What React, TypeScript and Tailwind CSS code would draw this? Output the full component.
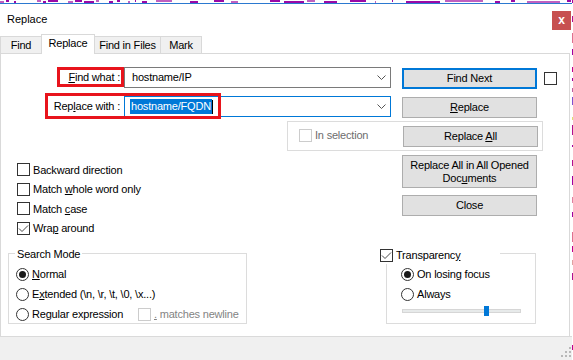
import React from "react";

function CheckBox({ checked, disabled }: { checked?: boolean; disabled?: boolean }) {
  return (
    <span
      className={`w-[13px] h-[13px] border ${disabled ? "border-[#cccccc]" : "border-[#333333]"} bg-white flex items-center justify-center shrink-0`}
    >
      {checked && (
        <svg width="11" height="11" viewBox="0 0 11 11">
          <path d="M1 5.5 L4 8.5 L10 2.5" fill="none" stroke="#4a4a4a" strokeWidth="1" />
        </svg>
      )}
    </span>
  );
}

function Radio({ selected }: { selected?: boolean }) {
  return (
    <span className="w-[13px] h-[13px] rounded-full border border-[#333333] bg-white flex items-center justify-center shrink-0">
      {selected && <span className="w-[7px] h-[7px] rounded-full bg-[#1a1a1a]" />}
    </span>
  );
}

function Btn({ children, focused, className = "" }: { children: React.ReactNode; focused?: boolean; className?: string }) {
  return (
    <div
      className={`w-[135px] bg-[#e1e1e1] ${focused ? "border-2 border-[#0078d7]" : "border border-[#adadad]"} flex items-center justify-center text-center leading-[13px] shrink-0 ${className}`}
    >
      {children}
    </div>
  );
}

function Chevron() {
  return (
    <svg width="9" height="5" viewBox="0 0 9 5" className="shrink-0">
      <path d="M0.5 0.5 L4.5 4.5 L8.5 0.5" fill="none" stroke="#555" strokeWidth="1" />
    </svg>
  );
}

const topBits: [number, number][] = [
  [0, 4], [6, 3], [14, 2], [37, 4], [43, 3], [48, 10], [68, 5], [75, 7], [84, 10], [96, 3], [109, 4], [117, 3], [128, 2], [135, 1], [142, 5], [156, 16], [190, 8], [214, 10], [231, 7], [270, 10], [284, 20], [307, 8], [324, 13], [350, 16], [375, 1], [392, 1], [406, 34], [445, 38], [495, 5], [511, 4], [527, 33], [567, 4],
];

const sideBits: [number, number, string][] = [
  [0, 3, "#a000a0"], [16, 6, "#b01090"], [33, 10, "#e07090"], [49, 6, "#a000a0"], [67, 5, "#c00090"], [78, 3, "#a000a0"], [88, 4, "#c060a0"], [97, 8, "#8050d0"], [117, 3, "#e0e070"], [125, 10, "#b01090"], [145, 2, "#a000a0"], [160, 6, "#b01090"], [176, 9, "#a000a0"], [197, 6, "#e080a0"], [212, 5, "#a000a0"], [232, 10, "#e07090"], [246, 6, "#c00090"], [260, 5, "#e0a0a0"], [273, 7, "#b01090"], [345, 5, "#c00090"],
];

export default function App() {
  return (
    <div className="w-[573px] h-[360px] overflow-hidden bg-white flex font-['Liberation_Sans',Arial,sans-serif] text-[11px] tracking-[-0.2px] text-black">
      <div className="w-[572px] h-[360px] flex flex-col">
        {/* background artifacts + accent line */}
        <svg width="572" height="3" className="block shrink-0">
          {topBits.map(([x, w], i) => (
            <rect key={i} x={x} y={i % 2 ? 0 : 1} width={w} height={2} fill={i % 3 ? "#9a0aa6" : "#c060c0"} />
          ))}
        </svg>
        <div className="h-px bg-[#2b79d0] shrink-0" />

        {/* title bar */}
        <div className="h-[30px] flex items-start shrink-0">
          <div className="pl-[7px] h-[30px] flex items-center text-[11px] tracking-normal">Replace</div>
          <div className="ml-auto mt-[7px] mr-px w-[19px] h-[19px] bg-[#c75050] text-white font-bold flex items-center justify-center text-[12px] leading-none pb-[2px]">
            x
          </div>
        </div>

        {/* tabs */}
        <div className="h-[19px] flex items-end shrink-0 relative z-10">
          <div className="w-[42px] h-[17px] bg-[#f0f0f0] border border-b-0 border-[#d9d9d9] flex items-center justify-center">Find</div>
          <div className="-ml-px w-[54px] h-[20px] -mb-px bg-white border border-b-0 border-[#d9d9d9] flex items-center justify-center pb-[3px]">Replace</div>
          <div className="-ml-px w-[67px] h-[17px] bg-[#f0f0f0] border border-b-0 border-[#d9d9d9] flex items-center justify-center">Find in Files</div>
          <div className="-ml-px w-[42px] h-[17px] bg-[#f0f0f0] border border-b-0 border-[#d9d9d9] flex items-center justify-center">Mark</div>
        </div>

        {/* panel */}
        <div className="w-[570px] h-[283px] border border-b-0 border-[#d9d9d9] flex flex-col shrink-0">
          {/* row 1 */}
          <div className="mt-[13px] h-[22px] flex items-start">
            <div className="ml-[56px] w-[67px] h-[20px] border-[3px] border-[#e8141c] flex items-center justify-end pr-[1px]">
              <span>
                <u>F</u>ind what :
              </span>
            </div>
            <div className="w-[267px] h-[21px] border border-[#7a7a7a] flex items-center pl-[7px] pr-[4px]">
              <span className="flex-1">hostname/IP</span>
              <Chevron />
            </div>
            <Btn focused className="ml-[11px] mt-px h-[21px]">Find Next</Btn>
            <div className="ml-[7px] mt-[5px]">
              <CheckBox />
            </div>
          </div>

          {/* row 2 */}
          <div className="mt-[7px] h-[22px] flex items-start relative">
            <div className="ml-[44px] w-[79px] h-[21px] flex items-center justify-end pr-[4px]">
              <span>
                Rep<u>l</u>ace with :
              </span>
            </div>
            <div className="w-[267px] h-[21px] border border-[#0078d7] flex items-center pl-[5px] pr-[4px]">
              <span className="flex-1 flex items-center">
                <span className="bg-[#0078d7] text-white px-px leading-[15px]">hostname/FQDN</span>
                <span className="w-px h-[14px] bg-black" />
              </span>
              <Chevron />
            </div>
            <Btn className="ml-[11px] mt-px h-[21px]">
              <span>
                <u>R</u>eplace
              </span>
            </Btn>
            <div className="absolute left-[44px] top-[-3px] w-[176px] h-[26px] border-[3px] border-[#e8141c]" />
          </div>

          {/* row 3: in selection group */}
          <div className="mt-[3px] flex">
            <div className="ml-[286px] w-[256px] h-[30px] border border-[#dcdcdc] flex items-start">
              <div className="ml-[11px] mt-[7px] flex items-center h-[13px]">
                <CheckBox disabled />
                <span className="ml-[3px] text-[#6d6d6d]">In selection</span>
              </div>
              <Btn className="ml-auto mr-[4px] mt-[4px] h-[21px]">
                <span>
                  Replace <u>A</u>ll
                </span>
              </Btn>
            </div>
          </div>

          {/* row 4 */}
          <div className="h-[102px] flex">
            <div className="w-[401px] pl-[16px] pt-[9px] flex flex-col">
              {[
                [<span key="a">Backward direction</span>, false],
                [<span key="b">Match <u>w</u>hole word only</span>, false],
                [<span key="c">Match <u>c</u>ase</span>, false],
                [<span key="d">Wra<u>p</u> around</span>, true],
              ].map(([label, checked], i) => (
                <div key={i} className="h-[19.5px] flex items-center">
                  <CheckBox checked={checked as boolean} />
                  <span className="ml-[3px]">{label as React.ReactNode}</span>
                </div>
              ))}
            </div>
            <div className="pt-[4px] flex flex-col gap-[7px]">
              <Btn className="h-[33px]">
                <span>
                  Replace All in All Opened
                  <br />
                  Doc<u>u</u>ments
                </span>
              </Btn>
              <Btn className="h-[21px]">Close</Btn>
            </div>
          </div>

          {/* row 5 */}
          <div className="flex items-start">
            <div className="ml-[7px] w-[239px] h-[71px] border border-[#dcdcdc] flex flex-col">
              <div className="-mt-[7px] ml-[6px] px-[2px] bg-white w-fit h-[14px] flex items-center">Search Mode</div>
              <div className="mt-[3px] pl-[7px] flex flex-col">
                <div className="h-[20px] flex items-center">
                  <Radio selected />
                  <span className="ml-[3px]">
                    <u>N</u>ormal
                  </span>
                </div>
                <div className="h-[20px] flex items-center">
                  <Radio />
                  <span className="ml-[3px]">
                    E<u>x</u>tended (\n, \r, \t, \0, \x...)
                  </span>
                </div>
                <div className="h-[20px] flex items-center">
                  <div className="w-[122px] flex items-center">
                    <Radio />
                    <span className="ml-[3px]">
                      Re<u>g</u>ular expression
                    </span>
                  </div>
                  <CheckBox disabled />
                  <span className="ml-[3px] text-[#838383]">
                    <u>.</u> matches newline
                  </span>
                </div>
              </div>
            </div>

            <div className="ml-[139px] w-[150px] h-[71px] border border-[#dcdcdc] flex flex-col">
              <div className="-mt-[7px] -ml-[9px] pl-[2px] w-[122px] h-[17px] bg-white flex items-center">
                <CheckBox checked />
                <span className="ml-[3px]">
                  Transparenc<u>y</u>
                </span>
              </div>
              <div className="pl-[14px] flex flex-col">
                <div className="h-[20px] flex items-center">
                  <Radio selected />
                  <span className="ml-[3px]">On losing focus</span>
                </div>
                <div className="h-[20px] flex items-center">
                  <Radio />
                  <span className="ml-[3px]">Always</span>
                </div>
              </div>
              <div className="mt-[5px] ml-[15px] w-[119px] h-[4px] bg-[#e7eaea] border border-[#d6d6d6] relative">
                <div className="absolute left-[81px] top-[-4px] w-[5px] h-[10px] bg-[#0078d7]" />
              </div>
            </div>
          </div>
        </div>

        {/* bottom bar */}
        <div className="flex-1 bg-[#f0f0f0] border-t border-[#dadada] flex items-end justify-end pr-px pb-[3px]">
          <svg width="10" height="10" viewBox="0 0 10 10">
            <rect x="8" y="0" width="2" height="2" fill="#b8b8b8" />
            <rect x="4" y="4" width="2" height="2" fill="#b8b8b8" />
            <rect x="8" y="4" width="2" height="2" fill="#b8b8b8" />
            <rect x="0" y="8" width="2" height="2" fill="#b8b8b8" />
            <rect x="4" y="8" width="2" height="2" fill="#b8b8b8" />
            <rect x="8" y="8" width="2" height="2" fill="#b8b8b8" />
          </svg>
        </div>
      </div>
      <svg width="1" height="360" className="block shrink-0">
        {sideBits.map(([y, h, c], i) => (
          <rect key={i} x={0} y={y} width={1} height={h} fill={c} />
        ))}
      </svg>
    </div>
  );
}
